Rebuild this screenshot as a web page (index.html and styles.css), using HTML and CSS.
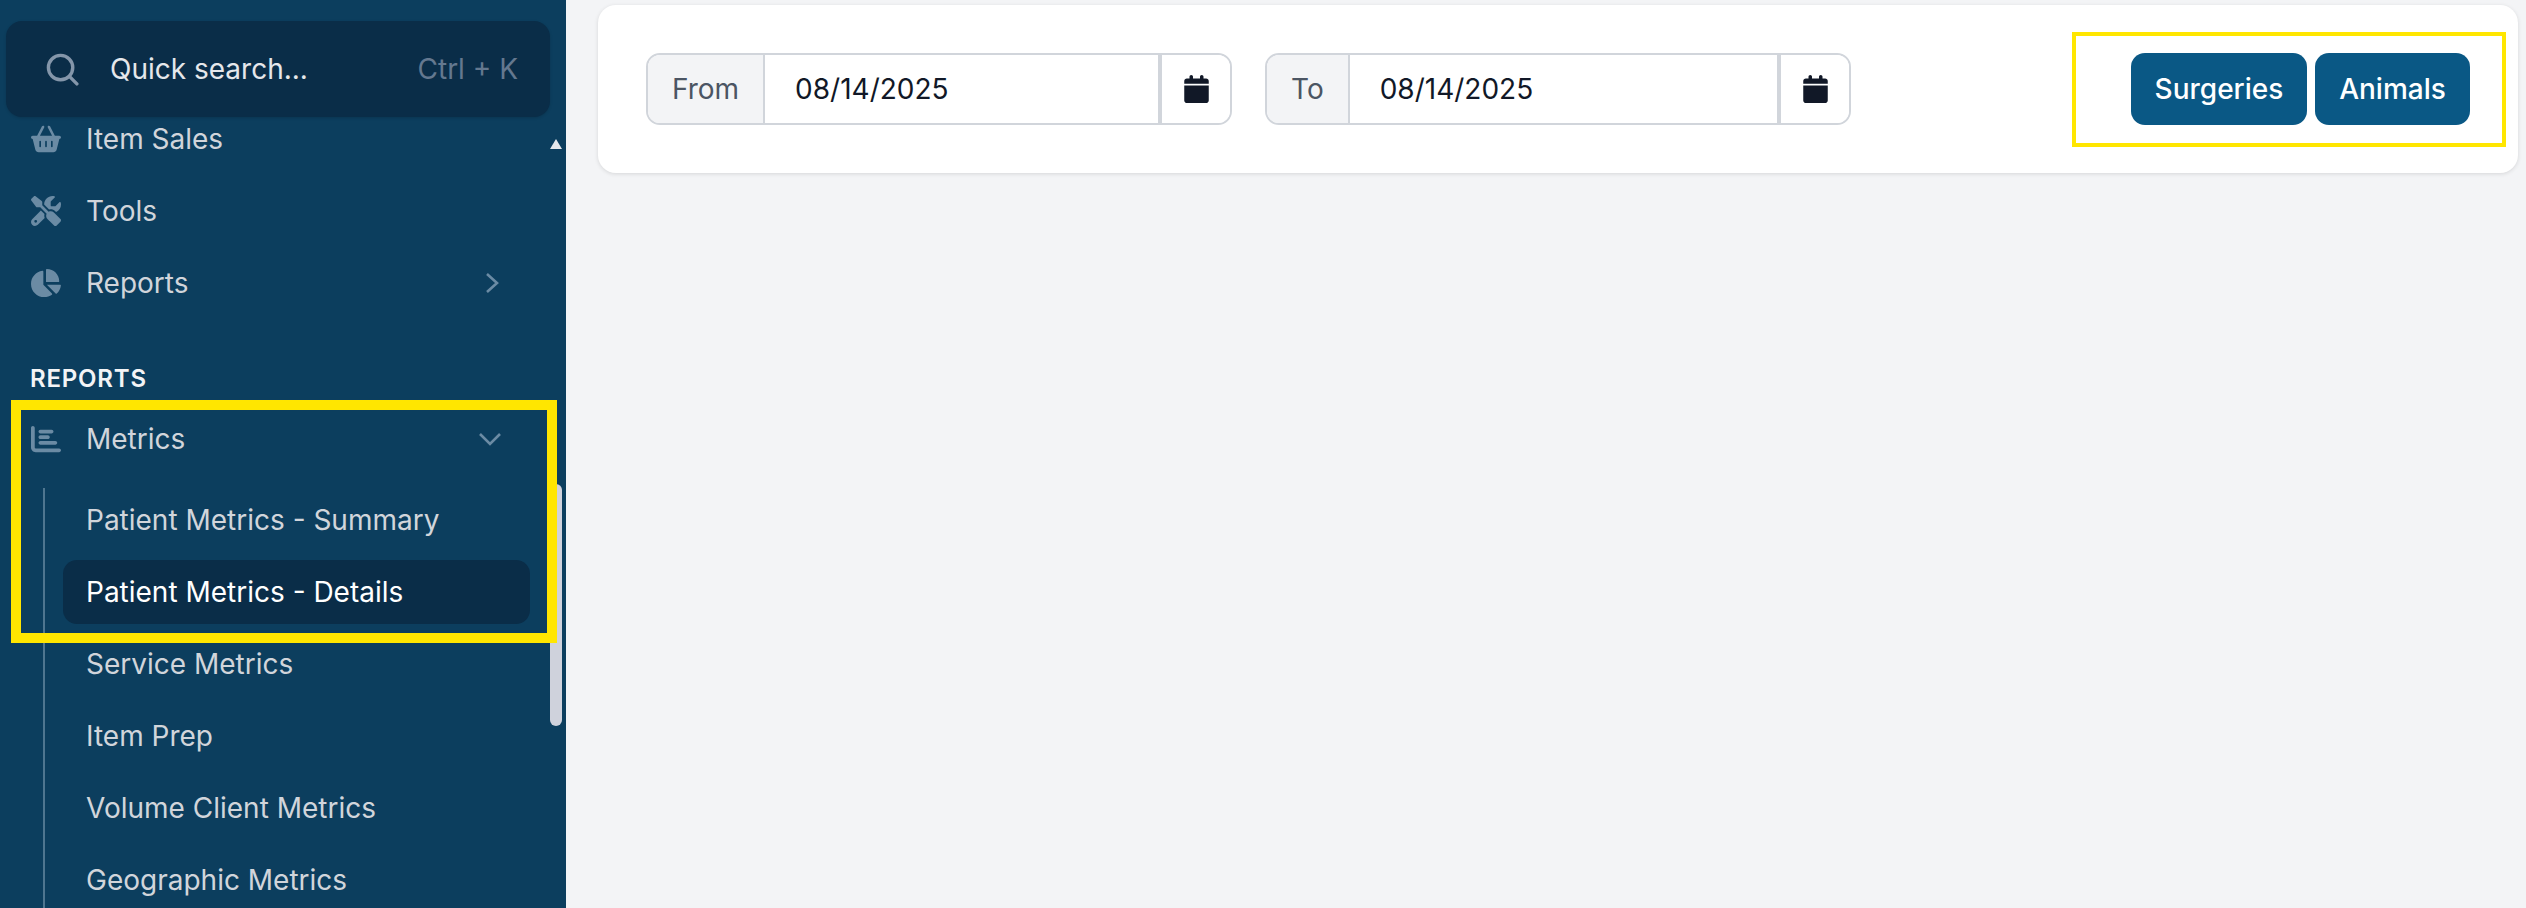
FILE: index.html
```html
<!DOCTYPE html>
<html lang="en">
<head>
    <meta charset="UTF-8">
    <title>Patient Metrics - Details</title>
    <link rel="stylesheet" href="styles.css">
</head>
<body>
    <aside class="sidebar">
        <div class="search">
            <svg class="search-icon" viewBox="0 0 24 24" fill="none" stroke="currentColor" stroke-width="2.4" stroke-linecap="round"><circle cx="11" cy="11" r="8.6"/><path d="M17.4 17.4L22.5 22.5"/></svg>
            <span class="search-text">Quick search...</span>
            <span class="search-key">Ctrl + K</span>
        </div>
        <div class="scroll-arrow"></div>
        <div class="scroll-thumb"></div>

        <nav class="nav">
            <a class="nav-row">
                <svg class="nav-icon" viewBox="0 0 576 512"><path d="M253.3 35.1c6.1-11.8 1.5-26.3-10.2-32.4s-26.3-1.5-32.4 10.2L117.6 192H32c-17.7 0-32 14.3-32 32s14.3 32 32 32L83.9 463.5C91 492 116.6 512 146 512H430c29.4 0 55-20 62.1-48.5L544 256c17.7 0 32-14.3 32-32s-14.3-32-32-32H458.4L365.3 12.9C359.2 1.2 344.7-3.4 332.9 2.7s-16.3 20.6-10.2 32.4L404.3 192H171.7L253.3 35.1zM192 304v96c0 8.8-7.2 16-16 16s-16-7.2-16-16V304c0-8.8 7.2-16 16-16s16 7.2 16 16zm96-16c8.8 0 16 7.2 16 16v96c0 8.8-7.2 16-16 16s-16-7.2-16-16V304c0-8.8 7.2-16 16-16zm128 16v96c0 8.8-7.2 16-16 16s-16-7.2-16-16V304c0-8.8 7.2-16 16-16s16 7.2 16 16z"/></svg>
                Item Sales
            </a>
            <a class="nav-row">
                <svg class="nav-icon" viewBox="0 0 512 512"><path d="M78.6 5C69.1-2.4 55.6-1.5 47 7L7 47c-8.5 8.5-9.4 22-2.1 31.6l80 104c4.5 5.9 11.6 9.4 19 9.4h54.1l109 109c-14.7 29-10 65.4 14.3 89.6l112 112c12.5 12.5 32.8 12.5 45.3 0l64-64c12.5-12.5 12.5-32.8 0-45.3l-112-112c-24.2-24.2-60.6-29-89.6-14.3l-109-109V104c0-7.5-3.5-14.5-9.4-19L78.6 5zM19.9 396.1C7.2 408.8 0 426.1 0 444.1C0 481.6 30.4 512 67.9 512c18 0 35.3-7.2 48-19.9L233.7 374.3c-7.8-20.9-9-43.6-3.6-65.1l-61.7-61.7L19.9 396.1zM512 144c0-10.5-1.1-20.7-3.2-30.5c-2.4-11.2-16.1-14.1-24.2-6l-63.9 63.9c-3 3-7.1 4.7-11.3 4.7H352c-8.8 0-16-7.2-16-16V102.6c0-4.2 1.7-8.3 4.7-11.3l63.9-63.9c8.1-8.1 5.2-21.8-6-24.2C388.7 1.1 378.5 0 368 0C288.5 0 224 64.5 224 144l0 .8 85.3 85.3c36-9.1 75.8 .5 104 28.7L429 274.5c49-23 83-72.8 83-130.5zM56 432a24 24 0 1 1 48 0 24 24 0 1 1 -48 0z"/></svg>
                Tools
            </a>
            <a class="nav-row">
                <svg class="nav-icon" viewBox="32 0 544 512"><path d="M304 240V16.6c0-9 7-16.6 16-16.6C443.7 0 544 100.3 544 224c0 9-7.6 16-16.6 16H304zM32 272C32 150.7 122.1 50.3 239 34.3c9.2-1.3 17 6.1 17 15.4V288L412.5 444.5c6.7 6.7 6.2 17.7-1.5 23.1C371.8 495.6 323.8 512 272 512C139.5 512 32 404.6 32 272zm526.4 16c9.3 0 16.6 7.8 15.4 17c-7.7 55.9-34.6 105.6-73.9 142.3c-6 5.6-15.4 5.2-21.2-.7L320 288H558.4z"/></svg>
                Reports
                <svg class="chev chev-right" viewBox="0 0 14 22" fill="none" stroke="currentColor" stroke-width="2.6"><path d="M2 2l10 9-10 9"/></svg>
            </a>

            <div class="nav-title">REPORTS</div>

            <a class="nav-row">
                <svg class="nav-icon" viewBox="0 32 512 448"><path d="M32 32c17.7 0 32 14.3 32 32V400c0 8.8 7.2 16 16 16H480c17.7 0 32 14.3 32 32s-14.3 32-32 32H80c-44.2 0-80-35.8-80-80V64C0 46.3 14.3 32 32 32zm96 96c0-17.7 14.3-32 32-32l192 0c17.7 0 32 14.3 32 32s-14.3 32-32 32l-192 0c-17.7 0-32-14.3-32-32zm32 64H288c17.7 0 32 14.3 32 32s-14.3 32-32 32H160c-17.7 0-32-14.3-32-32s14.3-32 32-32zm0 96H416c17.7 0 32 14.3 32 32s-14.3 32-32 32H160c-17.7 0-32-14.3-32-32s14.3-32 32-32z"/></svg>
                Metrics
                <svg class="chev chev-down" viewBox="0 0 22 14" fill="none" stroke="currentColor" stroke-width="2.6"><path d="M1 2l10 10L21 2"/></svg>
            </a>

            <div class="subnav">
                <a class="sub-row">Patient Metrics - Summary</a>
                <a class="sub-row active">Patient Metrics - Details</a>
                <a class="sub-row">Service Metrics</a>
                <a class="sub-row">Item Prep</a>
                <a class="sub-row">Volume Client Metrics</a>
                <a class="sub-row">Geographic Metrics</a>
            </div>
        </nav>

        <div class="mark mark-nav"></div>
    </aside>

    <main class="main">
        <section class="card">
            <div class="date-group">
                <span class="date-label">From</span>
                <div class="date-value">08/14/2025</div>
                <button class="date-btn">
                    <svg class="cal-icon" viewBox="0 0 448 512"><path d="M96 32V64H48C21.5 64 0 85.5 0 112v48H448V112c0-26.5-21.5-48-48-48H352V32c0-17.7-14.3-32-32-32s-32 14.3-32 32V64H160V32c0-17.7-14.3-32-32-32S96 14.3 96 32zM448 192H0V464c0 26.5 21.5 48 48 48H400c26.5 0 48-21.5 48-48V192z"/></svg>
                </button>
            </div>
            <div class="date-group">
                <span class="date-label">To</span>
                <div class="date-value">08/14/2025</div>
                <button class="date-btn">
                    <svg class="cal-icon" viewBox="0 0 448 512"><path d="M96 32V64H48C21.5 64 0 85.5 0 112v48H448V112c0-26.5-21.5-48-48-48H352V32c0-17.7-14.3-32-32-32s-32 14.3-32 32V64H160V32c0-17.7-14.3-32-32-32S96 14.3 96 32zM448 192H0V464c0 26.5 21.5 48 48 48H400c26.5 0 48-21.5 48-48V192z"/></svg>
                </button>
            </div>
            <div class="actions">
                <button class="btn btn-surgeries">Surgeries</button>
                <button class="btn btn-animals">Animals</button>
            </div>
            <div class="mark mark-actions"></div>
        </section>
    </main>
</body>
</html>
```

FILE: styles.css
```css
html, body {
    height: 100%;
}
body {
    margin: 0;
    display: flex;
    overflow: hidden;
    font-family: Inter, "Liberation Sans", sans-serif;
    background-color: #f3f4f6;
    color: #111827;
}
.sidebar {
    position: relative;
    width: 566px;
    flex-shrink: 0;
    background-color: #0c3e5e;
    overflow: hidden;
}

/* search box floats over the scrolled list */
.search {
    position: absolute;
    top: 21px;
    left: 6px;
    z-index: 2;
    width: 544px;
    height: 96px;
    box-sizing: border-box;
    padding: 0 32px 0 39px;
    display: flex;
    align-items: center;
    background-color: #0a2d48;
    border-radius: 16px;
    box-shadow: 0 1px 3px rgba(0, 0, 0, 0.15);
    font-size: 28px;
}
.search-icon {
    width: 34px;
    height: 34px;
    color: #8496aa;
    margin-right: 31px;
}
.search-text {
    color: #e5e7eb;
}
.search-key {
    margin-left: auto;
    color: #64788f;
}
.scroll-arrow {
    position: absolute;
    top: 139px;
    left: 550px;
    width: 0;
    height: 0;
    border-left: 6px solid transparent;
    border-right: 6px solid transparent;
    border-bottom: 10px solid #e5e7eb;
}
.scroll-thumb {
    position: absolute;
    top: 484px;
    left: 550px;
    width: 12px;
    height: 242px;
    background-color: #cfd2dc;
    border-radius: 6px;
}

.nav {
    padding-top: 103px;
    font-size: 28px;
    color: #d1d5db;
}
.nav-row {
    display: flex;
    align-items: center;
    height: 72px;
    padding-left: 31px;
}
.nav-icon {
    width: 30px;
    height: 30px;
    fill: #6b8ba4;
    margin-right: 25px;
}
.chev {
    color: #6b8ba4;
    margin-left: auto;
}
.chev-right {
    width: 14px;
    height: 22px;
    margin-right: 67px;
}
.chev-down {
    width: 22px;
    height: 14px;
    margin-right: 65px;
}
.nav-title {
    margin: 48px 0 12px;
    padding-left: 30px;
    height: 24px;
    line-height: 24px;
    font-size: 24px;
    font-weight: 600;
    letter-spacing: 0.8px;
    color: #f3f4f6;
}
.subnav {
    margin: 13px 0 0 43px;
    padding: 0 36px 120px 18px;
    border-left: 2px solid #4f7690;
}
.sub-row {
    display: flex;
    align-items: center;
    height: 64px;
    margin-bottom: 8px;
    padding-left: 23px;
    border-radius: 14px;
}
.sub-row.active {
    background-color: #0a2d48;
    color: #fff;
}

.main {
    flex: 1;
    min-width: 0;
    padding: 5px 8px 0 32px;
}
.card {
    position: relative;
    height: 168px;
    box-sizing: border-box;
    padding: 0 48px 0 48px;
    display: flex;
    align-items: center;
    gap: 33px;
    background: #fff;
    border-radius: 18px;
    box-shadow: 0 1px 4px rgba(0, 0, 0, 0.12);
}
.date-group {
    display: flex;
    width: 586px;
    height: 72px;
    box-sizing: border-box;
    border: 2px solid #d1d5db;
    border-radius: 14px;
    font-size: 28px;
}
.date-label {
    display: flex;
    align-items: center;
    padding: 0 24px;
    background-color: #f3f4f6;
    border-right: 2px solid #d1d5db;
    border-radius: 12px 0 0 12px;
    color: #4b5563;
}
.date-value {
    flex: 1;
    display: flex;
    align-items: center;
    padding-left: 30px;
}
.date-btn {
    width: 72px;
    padding: 0;
    display: flex;
    align-items: center;
    justify-content: center;
    background: #fff;
    border: none;
    border-left: 4px solid #d1d5db;
    border-radius: 0 12px 12px 0;
}
.cal-icon {
    width: 25px;
    height: 28px;
    fill: #111827;
}
.actions {
    margin-left: auto;
    display: flex;
    gap: 8px;
}
.btn {
    height: 72px;
    padding: 0;
    background-color: #0a5885;
    color: #fff;
    border: none;
    border-radius: 14px;
    font-family: inherit;
    font-size: 28px;
    font-weight: 500;
}
.btn-surgeries {
    width: 176px;
}
.btn-animals {
    width: 155px;
}

/* yellow highlight boxes drawn on top of the page */
.mark {
    position: absolute;
    box-sizing: border-box;
    pointer-events: none;
}
.mark-nav {
    top: 400px;
    left: 11px;
    width: 546px;
    height: 243px;
    border: 10px solid #ffe600;
}
.mark-actions {
    top: 27px;
    right: 12px;
    width: 434px;
    height: 115px;
    border: 4px solid #ffe600;
}
```
